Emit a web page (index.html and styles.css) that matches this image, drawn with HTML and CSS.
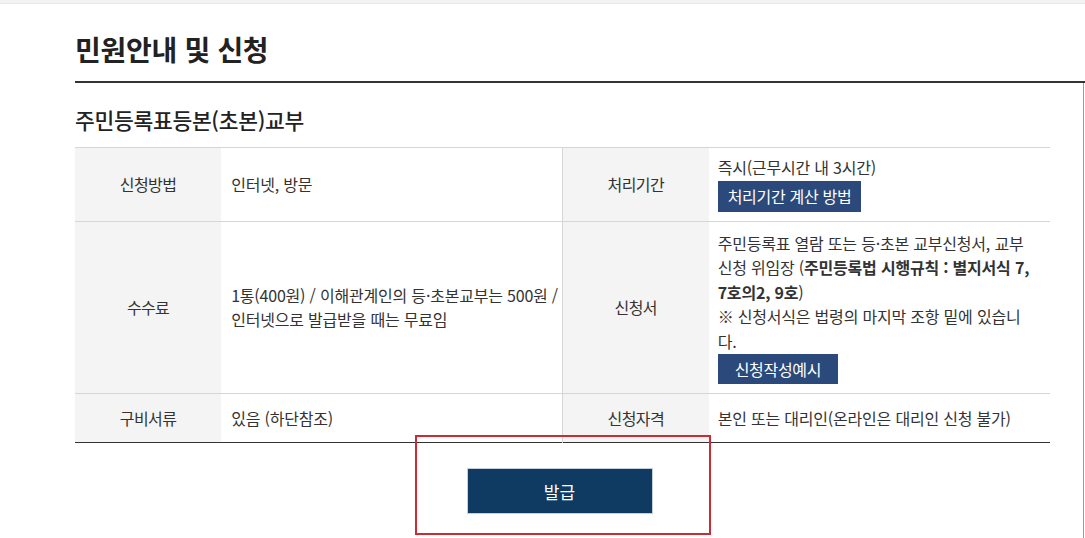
FILE: index.html
```html
<!DOCTYPE html>
<html lang="ko">
<head>
  <meta charset="UTF-8" />
  <meta name="viewport" content="width=device-width, initial-scale=1.0"/>
  <title>민원안내 및 신청</title>
  <link rel="stylesheet" href="styles.css">
</head>
<body>
  <div class="top-strip"></div>

  <div class="page">
    <div class="page-head">
      <h1>민원안내 및 신청</h1>
    </div>

    <div class="content">
      <div class="board">
        <h2>주민등록표등본(초본)교부</h2>

        <table class="info-table">
          <colgroup>
            <col class="col-label">
            <col class="col-value">
            <col class="col-label">
            <col class="col-value">
          </colgroup>
          <tbody>
            <tr class="row-method">
              <th>신청방법</th>
              <td>인터넷, 방문</td>
              <th class="split">처리기간</th>
              <td>
                <div>즉시(근무시간 내 3시간)</div>
                <a class="small-btn" href="#">처리기간 계산 방법</a>
              </td>
            </tr>
            <tr class="row-fee">
              <th>수수료</th>
              <td>1통(400원) / 이해관계인의 등·초본교부는 500원 /<br>인터넷으로 발급받을 때는 무료임</td>
              <th class="split">신청서</th>
              <td>
                <div>주민등록표 열람 또는 등·초본 교부신청서, 교부<br>신청 위임장 (<b>주민등록법 시행규칙 : 별지서식 7,<br>7호의2, 9호</b>)</div>
                <div>※ 신청서식은 법령의 마지막 조항 밑에 있습니<br>다.</div>
                <a class="small-btn wide" href="#">신청작성예시</a>
              </td>
            </tr>
            <tr class="row-docs">
              <th>구비서류</th>
              <td>있음 (하단참조)</td>
              <th class="split">신청자격</th>
              <td>본인 또는 대리인(온라인은 대리인 신청 불가)</td>
            </tr>
          </tbody>
        </table>

        <div class="issue-area">
          <button class="issue-btn">발급</button>
        </div>
      </div>
    </div>
  </div>
</body>
</html>
```

FILE: styles.css
```css
body {
  margin: 0;
  background: #fff;
  color: #333;
  font-family: "Noto Sans CJK KR", "Noto Sans", sans-serif;
  overflow: hidden;
}

.top-strip {
  height: 3px;
  background: #f3f3f3;
  border-bottom: 1px solid #e6e6e6;
}

.page {
  padding-left: 75px;
}

.page-head {
  padding: 25px 0 12px;
  border-bottom: 2px solid #333;
}

.page-head h1 {
  margin: 0;
  font-size: 28px;
  line-height: 40px;
  font-weight: 700;
  color: #222;
  letter-spacing: -0.3px;
}

.content {
  border-right: 1px solid #9a9a9a;
  margin-right: 1px;
  padding-top: 22px;
  height: 433px;
}

.board {
  width: 975px;
}

.board h2 {
  margin: 0 0 12px;
  font-size: 21.5px;
  line-height: 30px;
  font-weight: 500;
  color: #222;
  letter-spacing: -0.3px;
}

.info-table {
  width: 100%;
  table-layout: fixed;
  border-collapse: collapse;
  border-top: 1px solid #333;
  border-bottom: 1px solid #333;
  font-size: 16px;
}

.col-label {
  width: 146px;
}

.col-value {
  width: 341px;
}

.info-table th,
.info-table td {
  border-top: 1px solid #d6d6d6;
  vertical-align: middle;
  line-height: 24.5px;
}

.info-table th {
  background: #f4f4f4;
  font-weight: normal;
  color: #333;
  text-align: center;
  letter-spacing: -0.6px;
}

.info-table th.split {
  border-left: 1px solid #d6d6d6;
}

.info-table td {
  padding: 0 10px;
  color: #333;
  letter-spacing: -0.2px;
  white-space: nowrap;
}

.info-table td b {
  font-weight: 700;
}

.row-method td:last-child {
  padding: 7px 9px 9px;
}

.row-fee td:last-child {
  padding: 9px 9px 9px;
}

.row-docs th,
.row-docs td {
  height: 46px;
}

.row-docs td:last-child {
  padding-left: 9px;
}

.small-btn {
  display: inline-block;
  margin-top: 1px;
  padding: 0 10px;
  height: 31px;
  line-height: 31px;
  background: #2b4a7b;
  color: #fff;
  text-decoration: none;
  letter-spacing: -0.3px;
}

.small-btn.wide {
  height: 30px;
  line-height: 30px;
  padding: 0 17px;
}

.issue-area {
  width: 296px;
  height: 100px;
  box-sizing: border-box;
  margin: -8px auto 0;
  padding: 31px 6px 0 0;
  border: 2px solid #cc2a35;
  display: flex;
  justify-content: center;
  align-items: flex-start;
}

.issue-btn {
  width: 186px;
  height: 46px;
  background: #0f3a62;
  border: 1px solid #c5d0da;
  color: #fff;
  font-family: "Noto Sans CJK KR", "Noto Sans", sans-serif;
  font-size: 17px;
  cursor: pointer;
}
```
